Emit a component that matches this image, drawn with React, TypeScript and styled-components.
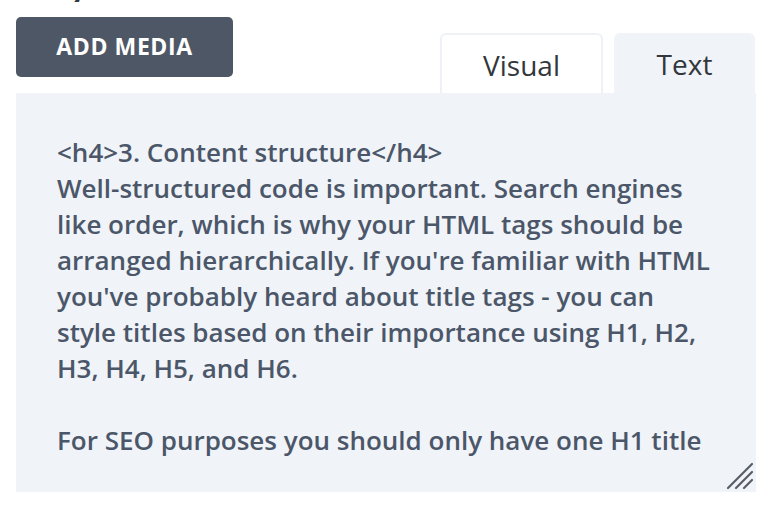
import React from "react";
import styled, { createGlobalStyle } from "styled-components";

const Global = createGlobalStyle`
  html, body { margin: 0; padding: 0; background: #ffffff; }
  body { font-family: "Open Sans", "Noto Sans", sans-serif; }
  * { box-sizing: border-box; }
`;

const Page = styled.div`
  width: 782px;
  height: 518px;
  padding: 0 26px 0 16px;
  overflow: hidden;
  display: flex;
  flex-direction: column;
`;

const FieldLabel = styled.div`
  height: 2px;
  overflow: hidden;
  display: flex;
  align-items: flex-end;
  font-size: 28px;
  font-weight: 700;
  color: #32373c;
`;

const LabelText = styled.span`
  display: block;
  line-height: 1;
  flex-shrink: 0;
`;

const Toolbar = styled.div`
  display: flex;
  justify-content: space-between;
  align-items: flex-start;
  height: 91px;
`;

const MediaButton = styled.button`
  margin-top: 15px;
  width: 217px;
  height: 60px;
  border: none;
  border-radius: 5px;
  background: #4e5766;
  color: #ffffff;
  font-family: "Open Sans", "Noto Sans", sans-serif;
  font-weight: 700;
  font-size: 23px;
  letter-spacing: 0.6px;
  text-transform: uppercase;
  padding: 0 0 2px;
`;

const Tabs = styled.div`
  display: flex;
  gap: 11px;
  margin-top: 31px;
  margin-right: 1px;
`;

const Tab = styled.div<{ $active?: boolean; $w: number }>`
  width: ${(p) => p.$w}px;
  height: 60px;
  display: flex;
  align-items: center;
  justify-content: center;
  font-size: 28px;
  font-weight: 500;
  color: #32373c;
  border-radius: 6px 6px 0 0;
  background: ${(p) => (p.$active ? "#f0f3f8" : "#ffffff")};
  border: ${(p) => (p.$active ? "none" : "2px solid #eef1f6")};
  border-bottom: none;
  padding-top: 2px;
`;

const Editor = styled.div`
  position: relative;
  height: 399px;
  background: #f0f3f8;
  padding: 41px 20px 0 41px;
  overflow: hidden;
`;

const Code = styled.div`
  font-size: 26px;
  font-weight: 600;
  line-height: 36px;
  color: #4b5769;
  white-space: pre;
`;

const Grip = styled.svg`
  position: absolute;
  right: 2px;
  bottom: 2px;
`;

const text = `<h4>3. Content structure</h4>
Well-structured code is important. Search engines
like order, which is why your HTML tags should be
arranged hierarchically. If you're familiar with HTML
you've probably heard about title tags - you can
style titles based on their importance using H1, H2,
H3, H4, H5, and H6.

For SEO purposes you should only have one H1 title`;

export default function App() {
  return (
    <>
      <Global />
      <Page>
        <FieldLabel>
          <LabelText>Body</LabelText>
        </FieldLabel>
        <Toolbar>
          <MediaButton>Add Media</MediaButton>
          <Tabs>
            <Tab $w={163}>Visual</Tab>
            <Tab $w={141} $active>Text</Tab>
          </Tabs>
        </Toolbar>
        <Editor>
          <Code>{text}</Code>
          <Grip width="28" height="28" viewBox="0 0 28 28">
            <g stroke="#555c66" strokeWidth="2.2" strokeLinecap="round">
              <line x1="26" y1="2" x2="2" y2="26" />
              <line x1="26" y1="10" x2="10" y2="26" />
              <line x1="26" y1="18" x2="18" y2="26" />
            </g>
          </Grip>
        </Editor>
      </Page>
    </>
  );
}
